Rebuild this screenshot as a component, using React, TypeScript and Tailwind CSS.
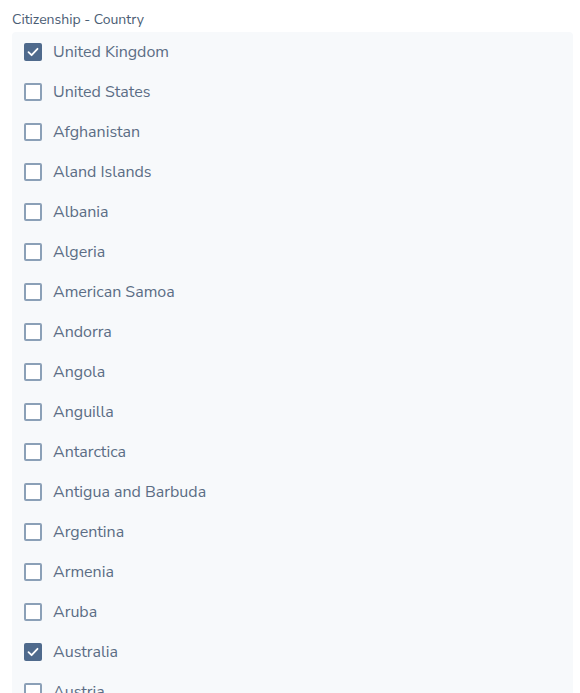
import React from "react";

const countries: [string, boolean][] = [
  ["United Kingdom", true],
  ["United States", false],
  ["Afghanistan", false],
  ["Aland Islands", false],
  ["Albania", false],
  ["Algeria", false],
  ["American Samoa", false],
  ["Andorra", false],
  ["Angola", false],
  ["Anguilla", false],
  ["Antarctica", false],
  ["Antigua and Barbuda", false],
  ["Argentina", false],
  ["Armenia", false],
  ["Aruba", false],
  ["Australia", true],
  ["Austria", false],
  ["Azerbaijan", false],
];

export default function App() {
  return (
    <div className="h-[693px] overflow-hidden bg-white pl-3 pr-[7px] pt-[10px]" style={{ fontFamily: "'Nunito Sans', Lato, 'Open Sans', sans-serif" }}>
      <div className="text-[14px] leading-[19px] text-[#4b5d74] mb-[3px]">Citizenship - Country</div>
      <div className="bg-[#f7f9fb] rounded-[4px]">
        {countries.map(([name, checked]) => (
          <div key={name} className="flex items-center h-[40px] pl-3">
            {checked ? (
              <div className="w-[18px] h-[18px] rounded-[2px] bg-[#4f6a8c] flex items-center justify-center">
                <svg width="14" height="14" viewBox="0 0 14 14" fill="none">
                  <path d="M2.5 7.2 L5.6 10.2 L11.5 3.8" stroke="white" strokeWidth="1.8" strokeLinecap="round" strokeLinejoin="round" />
                </svg>
              </div>
            ) : (
              <div className="w-[18px] h-[18px] rounded-[2px] border-2 border-[#8ba0b7] bg-white" />
            )}
            <span className="ml-[11px] text-[16px] leading-[20px] text-[#5b6d85]">{name}</span>
          </div>
        ))}
      </div>
    </div>
  );
}
